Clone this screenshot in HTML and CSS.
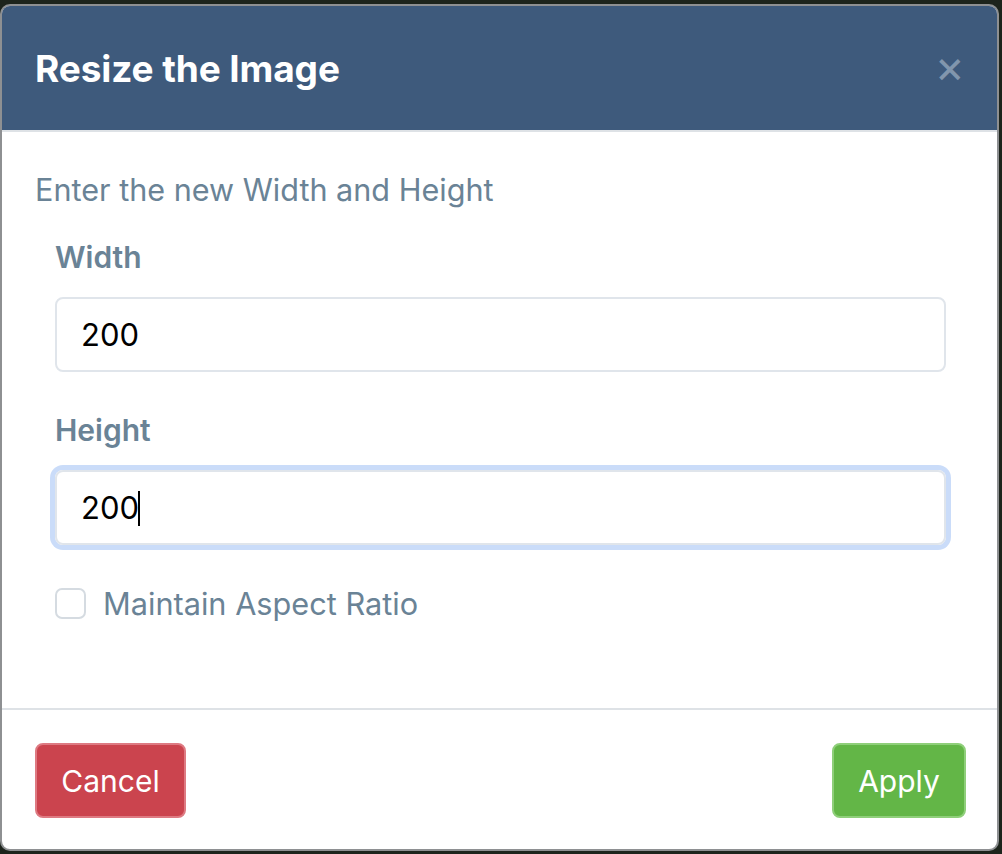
FILE: index.html
```html
<!DOCTYPE html>
<html lang="en">
<head>
  <meta charset="UTF-8" />
  <title>Resize the Image</title>
  <link rel="stylesheet" href="styles.css">
</head>
<body>
  <div class="modal">
    <header class="modal-header">
      <h1 class="modal-title">Resize the Image</h1>
      <span class="close-btn">&times;</span>
    </header>

    <div class="modal-body">
      <p class="hint">Enter the new Width and Height</p>
      <div class="form-group">
        <label class="field-label" for="width">Width</label>
        <div class="input-wrap">
          <input class="field" id="width" type="text" value="200">
        </div>
      </div>
      <div class="form-group">
        <label class="field-label" for="height">Height</label>
        <div class="input-wrap focused">
          <input class="field" id="height" type="text" value="200">
          <span class="caret-line"></span>
        </div>
      </div>
      <label class="check-row">
        <span class="check-box"></span>
        Maintain Aspect Ratio
      </label>
    </div>

    <footer class="modal-footer">
      <button class="btn btn-cancel">Cancel</button>
      <button class="btn btn-apply">Apply</button>
    </footer>
  </div>
</body>
</html>
```

FILE: styles.css
```css
* {
  box-sizing: border-box;
}

body {
  margin: 0;
  height: 854px;
  overflow: hidden;
  font-family: Inter, "Liberation Sans", sans-serif;
  background: #1d241c;
}

.modal {
  margin: 4px 3px 0 0;
  height: 847px;
  background: #fff;
  border: 2px solid #8e9092;
  border-radius: 10px;
  overflow: hidden;
  display: flex;
  flex-direction: column;
}

.modal-header {
  height: 126px;
  background: #3e5a7c;
  border-bottom: 2px solid #dee2e6;
  display: flex;
  align-items: center;
  justify-content: space-between;
  padding: 0 32px 0 33px;
}

.modal-title {
  margin: 0;
  color: #fff;
  font-size: 37px;
  font-weight: 700;
  letter-spacing: -0.1px;
}

.close-btn {
  color: #8196ad;
  font-size: 46px;
  font-weight: 400;
  line-height: 1;
  margin-top: -4px;
}

.modal-body {
  flex: 1;
  padding: 38px 51px 0 33px;
  color: #6a8396;
}

.hint {
  margin: 0 0 29px;
  font-size: 30.6px;
  line-height: 39px;
}

.form-group {
  margin: 0 0 39px 20px;
}

.field-label {
  display: block;
  font-size: 30px;
  font-weight: 600;
  line-height: 39px;
  margin-bottom: 20px;
}

.input-wrap {
  position: relative;
  border-radius: 8px;
}

.input-wrap.focused {
  box-shadow: 0 0 0 5px #cadcf9;
}

.field {
  width: 100%;
  height: 75px;
  border: 2px solid #e0e5eb;
  border-radius: 8px;
  padding: 0 24px;
  font-family: inherit;
  font-size: 31px;
  color: #000;
  outline: none;
  background: #fff;
}

.caret-line {
  position: absolute;
  left: 83px;
  top: 21px;
  width: 2px;
  height: 35px;
  background: #000;
}

.check-row {
  display: flex;
  align-items: center;
  gap: 17px;
  margin-left: 20px;
  font-size: 30.7px;
  line-height: 39px;
}

.check-box {
  width: 31px;
  height: 31px;
  border: 2px solid #d5dbe1;
  border-radius: 7px;
  background: #fff;
}

.modal-footer {
  border-top: 2px solid #dee2e6;
  display: flex;
  justify-content: space-between;
  padding: 33px 31px 31px 33px;
}

.btn {
  height: 75px;
  border-radius: 8px;
  font-family: inherit;
  font-size: 30px;
  color: #fff;
  padding: 0 20px;
}

.btn-cancel {
  width: 151px;
  background: #cb444e;
  border: 2px solid #de7a82;
}

.btn-apply {
  width: 134px;
  background: #63b647;
  border: 2px solid #8fcf7a;
}
```
